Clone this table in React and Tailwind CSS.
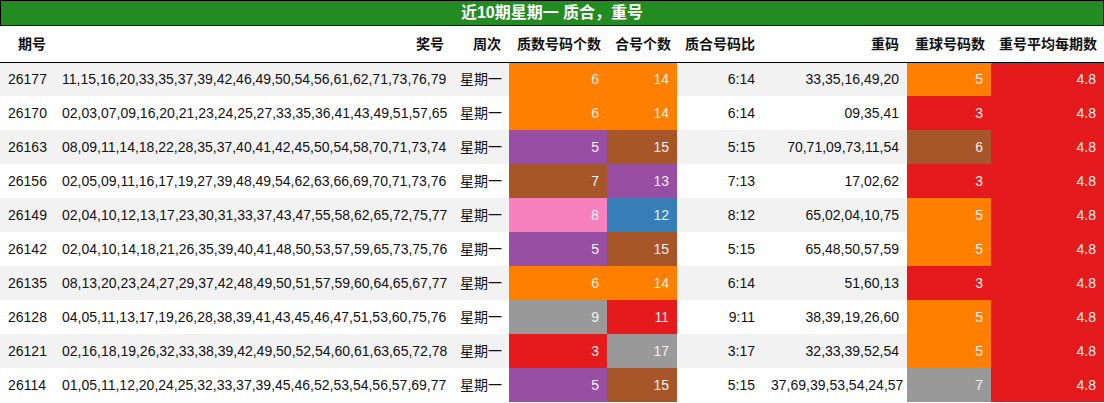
const C = {
  orange: "bg-[#ff7f00]",
  red: "bg-[#e41a1c]",
  purple: "bg-[#984ea3]",
  brown: "bg-[#a65628]",
  pink: "bg-[#f781bf]",
  blue: "bg-[#377eb8]",
  grey: "bg-[#999999]",
};

const rows = [
  ["26177", "11,15,16,20,33,35,37,39,42,46,49,50,54,56,61,62,71,73,76,79", 6, "orange", 14, "orange", "6:14", "33,35,16,49,20", 5, "orange"],
  ["26170", "02,03,07,09,16,20,21,23,24,25,27,33,35,36,41,43,49,51,57,65", 6, "orange", 14, "orange", "6:14", "09,35,41", 3, "red"],
  ["26163", "08,09,11,14,18,22,28,35,37,40,41,42,45,50,54,58,70,71,73,74", 5, "purple", 15, "brown", "5:15", "70,71,09,73,11,54", 6, "brown"],
  ["26156", "02,05,09,11,16,17,19,27,39,48,49,54,62,63,66,69,70,71,73,76", 7, "brown", 13, "purple", "7:13", "17,02,62", 3, "red"],
  ["26149", "02,04,10,12,13,17,23,30,31,33,37,43,47,55,58,62,65,72,75,77", 8, "pink", 12, "blue", "8:12", "65,02,04,10,75", 5, "orange"],
  ["26142", "02,04,10,14,18,21,26,35,39,40,41,48,50,53,57,59,65,73,75,76", 5, "purple", 15, "brown", "5:15", "65,48,50,57,59", 5, "orange"],
  ["26135", "08,13,20,23,24,27,29,37,42,48,49,50,51,57,59,60,64,65,67,77", 6, "orange", 14, "orange", "6:14", "51,60,13", 3, "red"],
  ["26128", "04,05,11,13,17,19,26,28,38,39,41,43,45,46,47,51,53,60,75,76", 9, "grey", 11, "red", "9:11", "38,39,19,26,60", 5, "orange"],
  ["26121", "02,16,18,19,26,32,33,38,39,42,49,50,52,54,60,61,63,65,72,78", 3, "red", 17, "grey", "3:17", "32,33,39,52,54", 5, "orange"],
  ["26114", "01,05,11,12,20,24,25,32,33,37,39,45,46,52,53,54,56,57,69,77", 5, "purple", 15, "brown", "5:15", "37,69,39,53,54,24,57", 7, "grey"],
];

const headers = ["期号", "奖号", "周次", "质数号码个数", "合号个数", "质合号码比", "重码", "重球号码数", "重号平均每期数"];
const widths = ["w-[54px]", "w-[398px]", "w-[57px]", "w-[98px]", "w-[70px]", "w-[86px]", "w-[144px]", "w-[84px]", "w-[113px]"];

export default function App() {
  const td = "h-[34px] px-2 text-right whitespace-nowrap";
  const colored = "h-[34px] px-2 text-right text-[#f1f1f1]";
  return (
    <div className="w-[1104px] bg-white text-[14px] text-[#111] font-['Liberation_Sans','Noto_Sans_CJK_SC',sans-serif]">
      <div className="h-[26px] bg-[#228b22] border border-black flex items-center justify-center text-white font-bold text-[16px]">
        近10期星期一 质合，重号
      </div>
      <table className="table-fixed border-collapse w-[1104px]">
        <colgroup>
          {widths.map((w, i) => (
            <col key={i} className={w} />
          ))}
        </colgroup>
        <thead>
          <tr className="border-b border-black">
            {headers.map((h) => (
              <th key={h} className="h-[36px] px-2 pt-[2px] pb-0 text-right font-bold whitespace-nowrap">
                {h}
              </th>
            ))}
          </tr>
        </thead>
        <tbody>
          {rows.map((r, i) => (
            <tr key={r[0]} className={i % 2 === 0 ? "bg-[#f2f2f2]" : "bg-white"}>
              <td className={td}>{r[0]}</td>
              <td className={td}>{r[1]}</td>
              <td className={td}>星期一</td>
              <td className={`${colored} ${C[r[3]]}`}>{r[2]}</td>
              <td className={`${colored} ${C[r[5]]}`}>{r[4]}</td>
              <td className={td}>{r[6]}</td>
              <td className={td}>{r[7]}</td>
              <td className={`${colored} ${C[r[9]]}`}>{r[8]}</td>
              <td className={`${colored} ${C.red}`}>4.8</td>
            </tr>
          ))}
        </tbody>
      </table>
    </div>
  );
}
